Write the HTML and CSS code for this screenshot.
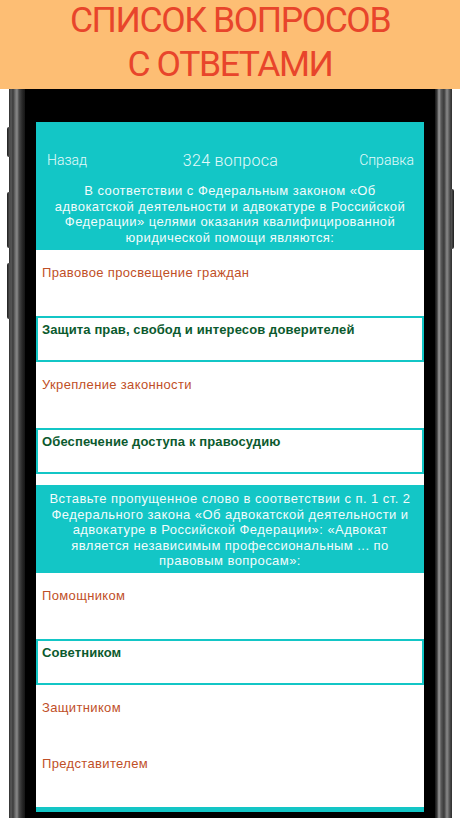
FILE: index.html
```html
<!DOCTYPE html>
<html lang="ru">
<head>
<meta charset="utf-8">
<title>Список вопросов с ответами</title>
<link rel="stylesheet" href="styles.css">
</head>
<body>
<header class="banner">
  <h1 class="banner-title"><span class="line">СПИСОК ВОПРОСОВ</span><span class="line">С ОТВЕТАМИ</span></h1>
</header>
<div class="phone">
  <span class="btn btn-mute"></span>
  <span class="btn btn-vol-up"></span>
  <span class="btn btn-vol-down"></span>
  <span class="btn btn-power"></span>
  <div class="bezel">
    <div class="screen">
      <div class="qblock">
        <nav class="navbar">
          <span class="nav-left">Назад</span>
          <span class="nav-title">324 вопроса</span>
          <span class="nav-right">Справка</span>
        </nav>
        <p class="question">В соответствии с Федеральным законом «Об адвокатской деятельности и адвокатуре в Российской Федерации» целями оказания квалифицированной юридической помощи являются:</p>
      </div>
      <ul class="answers">
        <li class="answer">Правовое просвещение граждан</li>
        <li class="answer correct"><span>Защита прав, свобод и интересов доверителей</span></li>
        <li class="answer">Укрепление законности</li>
        <li class="answer correct"><span>Обеспечение доступа к правосудию</span></li>
      </ul>
      <div class="qblock">
        <p class="question q2">Вставьте пропущенное слово в соответствии с п. 1 ст. 2 Федерального закона «Об адвокатской деятельности и адвокатуре в Российской Федерации»: «Адвокат является независимым профессиональным ... по правовым вопросам»:</p>
      </div>
      <ul class="answers last">
        <li class="answer">Помощником</li>
        <li class="answer correct"><span>Советником</span></li>
        <li class="answer">Защитником</li>
        <li class="answer">Представителем</li>
      </ul>
      <div class="qblock stub"></div>
    </div>
  </div>
</div>
</body>
</html>
```

FILE: styles.css
```css
html, body {
  margin: 0;
  padding: 0;
}
body {
  width: 460px;
  height: 818px;
  overflow: hidden;
  background: #ffffff;
  font-family: "Liberation Sans", Arial, sans-serif;
}

.banner {
  position: relative;
  z-index: 2;
  height: 89px;
  box-sizing: border-box;
  background: #fdbe74;
  overflow: hidden;
}
.banner-title {
  margin: -2px 0 0;
  display: flex;
  flex-direction: column;
  align-items: center;
  font-family: "Roboto", "Liberation Sans", sans-serif;
  font-weight: 400;
  font-size: 35.5px;
  line-height: 44px;
  color: #e8452b;
  letter-spacing: -1.4px;
}
.banner-title .line {
  display: block;
  height: 44px;
}

.phone {
  position: relative;
  margin-left: 9px;
  width: 443px;
  height: 760px;
  background:
    linear-gradient(to right,
      #2e2e2e 0px, #5a5a5a 2px, #3a3a3a 4px, #6b6b6b 6px, #8a8a8a 8px, #4a4a4a 10px, #2a2a2a 13px, #151515 16px,
      transparent 16px, transparent 426px,
      #151515 426px, #3a3a3a 428px, #9a9a9a 430px, #5a5a5a 432px, #3a3a3a 435px, #8a8a8a 438px, #4a4a4a 441px, #2e2e2e 443px);
}
.btn {
  position: absolute;
  width: 3px;
  background: linear-gradient(to right, #1e1e1e, #5a5a5a);
  border-radius: 2px 0 0 2px;
}
.btn-mute { left: -2px; top: 38px; height: 30px; }
.btn-vol-up { left: -2px; top: 103px; height: 56px; }
.btn-vol-down { left: -2px; top: 174px; height: 56px; }
.btn-power {
  right: -2px;
  top: 100px;
  height: 60px;
  border-radius: 0 2px 2px 0;
  background: linear-gradient(to right, #5a5a5a, #1e1e1e);
}

.bezel {
  margin: 0 17px 0 16px;
  height: 100%;
  background: #000;
  padding: 33px 11px 0 11px;
  box-sizing: border-box;
}

.screen {
  background: #ffffff;
  height: 690px;
  overflow: hidden;
}

.qblock {
  background: #13c6c6;
}
.navbar {
  display: grid;
  grid-template-columns: 1fr auto 1fr;
  align-items: center;
  padding: 28px 10px 13px 11px;
  height: 20px;
  font-family: "Roboto", "Liberation Sans", sans-serif;
  font-weight: 300;
  color: #e6fbfb;
}
.nav-left {
  font-size: 14px;
  justify-self: start;
}
.nav-right {
  font-size: 14px;
  justify-self: end;
}
.nav-title {
  font-size: 16px;
  letter-spacing: 0.3px;
  justify-self: center;
}

.question {
  margin: 0;
  padding: 0 8px 5px;
  font-size: 13px;
  line-height: 15.5px;
  letter-spacing: 0.45px;
  color: #f2fcfc;
  text-align: center;
}
.question.q2 {
  padding: 6px 8px 4.5px;
}

.answers {
  list-style: none;
  margin: 0;
  padding: 0 0 11px;
  background: #fff;
}
.answers.last {
  padding-bottom: 10px;
}
.answer {
  height: 56px;
  box-sizing: border-box;
  padding: 15px 6px 0;
  font-size: 13px;
  line-height: 16px;
  letter-spacing: 0.35px;
  color: #bf4f27;
}
.answer.correct {
  padding: 10px 0 0;
}
.answer.correct span {
  display: block;
  height: 46px;
  box-sizing: border-box;
  border: 2px solid #13c6c6;
  padding: 4px 4px 0;
  font-weight: 700;
  letter-spacing: 0.12px;
  color: #0b5a2e;
}

.stub {
  height: 5px;
}
```
